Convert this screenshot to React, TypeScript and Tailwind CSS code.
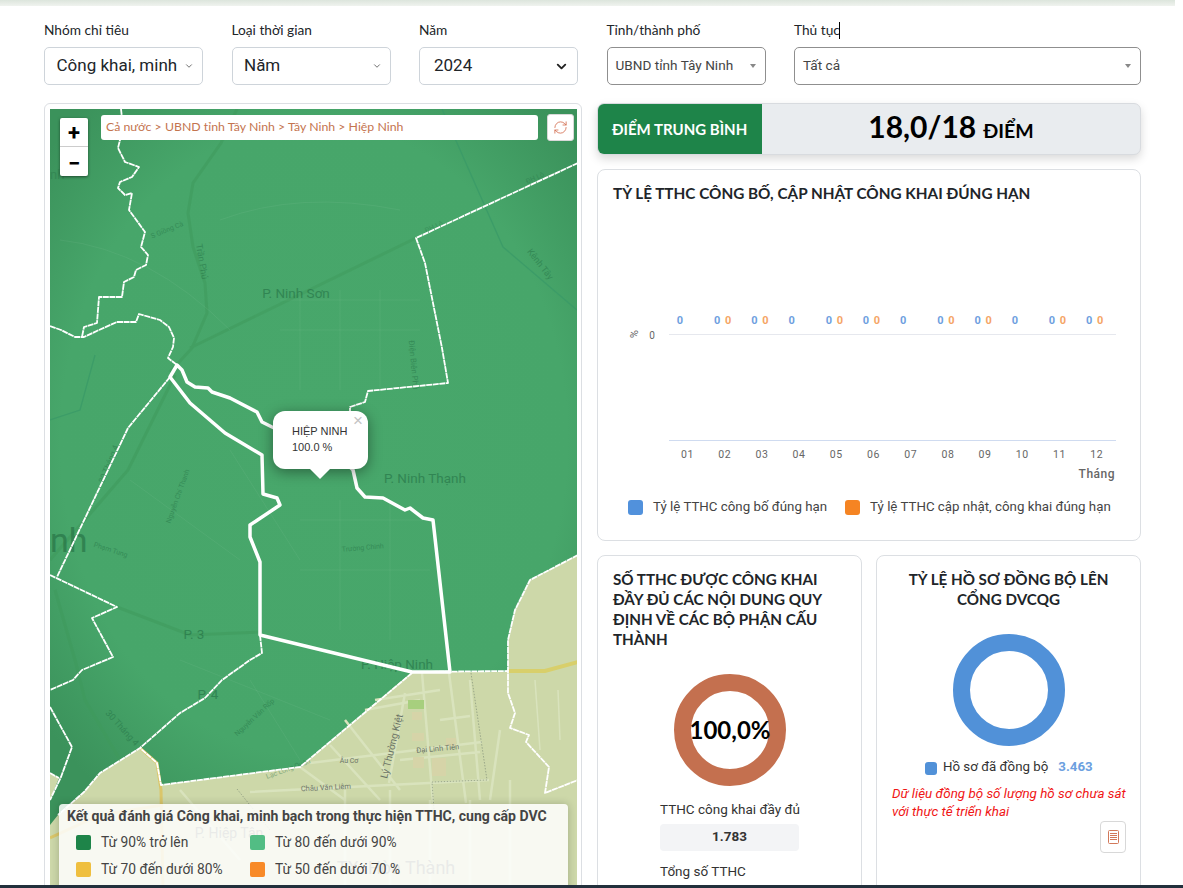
import React from "react";
import { RefreshCw, ChevronDown } from "lucide-react";

const HEAD = "font-['Lato','Noto_Sans',sans-serif]";
const ROB = "font-['Roboto',sans-serif]";

const thick =
  "177,365 182,370 187,382 195,387 208,388 212,392 230,398 257,412 262,422 272,427 300,440 350,467 353,470 357,488 365,497 383,498 405,510 410,508 423,518 433,520 450,672 412,672 260,635 260,562 250,537 250,525 280,505 277,498 263,494 262,455 225,433 190,403 170,377";

const dashed = [
  "121,109 122,118 120,140 118,148 125,162 139,167 132,177 120,182 118,188 125,195 132,193 129,210 145,232 141,247 148,255 146,265 136,270 134,277 124,282 122,297 99,297 97,323 84,327 82,337",
  "50,326 61,330 75,337 84,337 99,330 117,322 136,322 139,314 160,320 169,327 174,338 173,347 168,358 177,365",
  "578,163 416,238 425,263 442,348 448,383 368,391 365,402 350,407 350,412",
  "170,377 128,428 57,577",
  "50,575 117,607 92,618 113,657 82,670 73,680 50,690",
  "260,635 262,653 250,660 222,680 205,698 180,713 140,748 100,773 84,792 58,815",
  "50,707 72,747 61,777 50,800",
  "412,673 300,767 161,785 157,763 140,748",
  "412,672 508,671 508,693 515,713 510,728 529,735 526,742 549,767 545,793 578,780",
  "578,555 530,580 515,610 508,640 508,671",
  "50,773 59,778",
];

function GreenLabel({ x, y, r = 0, s = 9, t, o = 0.45 }: { x: number; y: number; r?: number; s?: number; t: string; o?: number }) {
  return (
    <text x={x} y={y} fontSize={s} fill="#1f6b41" opacity={o} textAnchor="middle" fontFamily="Roboto, sans-serif" transform={r ? `rotate(${r} ${x} ${y})` : undefined}>
      {t}
    </text>
  );
}

function LandLabel({ x, y, r = 0, s = 9, t, o = 0.85 }: { x: number; y: number; r?: number; s?: number; t: string; o?: number }) {
  return (
    <text x={x} y={y} fontSize={s} fill="#59635a" opacity={o} textAnchor="middle" fontFamily="Roboto, sans-serif" transform={r ? `rotate(${r} ${x} ${y})` : undefined}>
      {t}
    </text>
  );
}

function MapDrawing() {
  return (
    <svg viewBox="50 109 528 790" className="block w-[528px] h-[790px]">
      <defs>
        <radialGradient id="gr" gradientUnits="userSpaceOnUse" cx="314" cy="440" r="440" gradientTransform="translate(314 440) scale(0.8 1) translate(-314 -440)">
          <stop offset="0" stopColor="#48a76b" />
          <stop offset="0.72" stopColor="#47a66a" />
          <stop offset="1" stopColor="#3b925b" />
        </radialGradient>
      </defs>
      <rect x="50" y="109" width="528" height="790" fill="#cdd8a9" />
      <polygon points="50,109 578,109 578,555 530,580 515,610 508,640 508,672 412,672 300,767 161,785 157,763 140,748 100,773 84,792 58,815 50,825" fill="url(#gr)" />
      <polygon points="50,773 59,778 50,800" fill="#cdd8a9" />
      {/* green roads */}
      <g fill="none" stroke="#3f9a5c" strokeWidth="3" opacity="0.55">
        <polyline points="237,109 221,143 193,183 188,213 193,247 205,283 207,313 192,348 170,372" />
        <polyline points="190,348 416,238" />
        <polyline points="50,560 128,470 175,375" />
        <polyline points="117,607 190,635 260,632" />
        <polyline points="55,590 75,660 85,700 120,760" />
      </g>
      <g fill="none" stroke="#3a9a68" strokeWidth="1.3" opacity="0.8">
        <polyline points="442,109 503,247 577,310" />
        <polyline points="50,420 80,410 95,355" />
      </g>
      <g fill="none" stroke="#fff" strokeWidth="1" opacity="0.05">
        <path d="M280 300H420M280 330H420M300 290V390M340 290V390M380 290V390M230 450L300 560M130 480L240 560M300 520H430M300 570H430M340 500V630M390 500V640M180 660L330 720M250 680L300 760M220 220Q300 190 400 210M60 240Q150 250 230 330" />
      </g>
      {/* land roads */}
      <g fill="none" stroke="#d9e3bd" strokeWidth="2.5">
        <path d="M422 673L433 803M449 673L466 803M405 693L389 783M310 763L482 742M250 792L489 780M330 745L380 800M345 720L400 790M300 767L345 800M470 680L480 800M500 730L490 800M365 710L420 700M375 700L440 690M440 720L470 716M400 760L480 752M345 790L345 890M390 790L390 890M430 800L430 890M470 800L470 890M510 780L510 890M180 790L240 860" />
        <path d="M535 680L540 750M558 690L560 740" strokeWidth="1.5" />
      </g>
      <g fill="none" stroke="#dac66a" strokeWidth="3">
        <polyline points="508,671 545,671 578,662" stroke="#d8cf6b" strokeWidth="4" />
        <polyline points="140,748 157,763 161,790 163,890" />
        <polyline points="50,838 100,815 163,805" />
      </g>
      <polyline points="471,673 487,780 432,782 434,810" fill="none" stroke="#8d9a80" strokeWidth="0.8" strokeDasharray="1.5 1.5" />
      <polyline points="237,789 270,830" fill="none" stroke="#8d9a80" strokeWidth="0.8" strokeDasharray="1.5 1.5" />
      <rect x="408" y="700" width="16" height="9" fill="#a7cf7e" />
      <g fill="#d6d4a8">
        <rect x="412" y="712" width="10" height="8" />
        <rect x="412" y="733" width="12" height="8" />
        <rect x="413" y="757" width="11" height="11" />
        <rect x="432" y="758" width="14" height="18" />
        <rect x="446" y="738" width="10" height="8" />
      </g>
      {/* labels */}
      <GreenLabel x={296} y={298} s={13.5} t="P. Ninh Sơn" o={0.55} />
      <GreenLabel x={425} y={483} s={13.5} t="P. Ninh Thạnh" o={0.55} />
      <GreenLabel x={194} y={639} s={13.5} t="P. 3" o={0.55} />
      <GreenLabel x={208} y={699} s={13.5} t="P. 4" o={0.55} />
      <GreenLabel x={397} y={669} s={13.5} t="P. Hiệp Ninh" o={0.55} />
      <text x={50} y={552} fontSize="34" fill="#287547" opacity="0.7" fontFamily="Roboto, sans-serif">nh</text>
      <text x={50} y={179} fontSize="13" fill="#287547" opacity="0.4" fontFamily="Roboto, sans-serif">nh</text>
      <GreenLabel x={199} y={262} r={80} s={9} t="Trần Phú" />
      <GreenLabel x={538} y={266} r={52} s={9} t="Kênh Tây" />
      <GreenLabel x={168} y={232} r={-22} s={7} t="S Giồng Cà" />
      <GreenLabel x={536} y={180} r={-25} s={7} t="ĐH Lộ" o={0.35} />
      <GreenLabel x={435} y={229} r={-25} s={7} t="ĐH Lộ" o={0.35} />
      <GreenLabel x={411} y={365} r={85} s={8} t="Điện Biên Phủ" />
      <GreenLabel x={180} y={497} r={-70} s={7} t="Nguyễn Chí Thanh" />
      <GreenLabel x={110} y={552} r={18} s={7} t="Phạm Tung" />
      <GreenLabel x={363} y={550} r={-5} s={7} t="Trường Chinh" />
      <GreenLabel x={111} y={465} r={-68} s={8} t="30 Tháng 4" />
      <GreenLabel x={120} y={730} r={48} s={9} t="30 Tháng 4" />
      <GreenLabel x={256} y={719} r={-43} s={7} t="Nguyễn Văn Rốp" />
      <GreenLabel x={289} y={771} r={-20} s={7} t="Lạc Long Quân" />
      <LandLabel x={349} y={763} s={7} t="Âu Cơ" />
      <LandLabel x={438} y={751} r={-5} s={7.5} t="Đại Linh Tiên" />
      <LandLabel x={326} y={790} r={-3} s={7.5} t="Châu Văn Liêm" />
      <LandLabel x={395} y={747} r={-76} s={10} t="Lý Thường Kiệt" />
      <LandLabel x={229} y={838} s={14} t="P. Hiệp Tân" />
      <LandLabel x={396} y={874} s={18} t="TX. Hòa Thành" />
      {/* boundaries */}
      <g fill="none" stroke="#fff" strokeLinejoin="round">
        {dashed.map((p) => (
          <polyline key={p} points={p} strokeWidth="1.8" strokeDasharray="6 0.6" />
        ))}
        <polygon points={thick} strokeWidth="3.5" />
      </g>
    </svg>
  );
}

const months = ["01", "02", "03", "04", "05", "06", "07", "08", "09", "10", "11", "12"];
const hasOrange = [false, true, true, false, true, true, false, true, true, false, true, true];

function BarChart() {
  return (
    <svg viewBox="617 300 514 190" className="block w-[514px] h-[190px]">
      <line x1="669" x2="1116" y1="334.5" y2="334.5" stroke="#e6e8ee" />
      <line x1="669" x2="1116" y1="440.5" y2="440.5" stroke="#cfdbf0" />
      <text x="633" y="334" fontSize="11" fill="#666" fontFamily="Roboto, sans-serif" transform="rotate(90 633 334)" textAnchor="middle" dominantBaseline="middle">%</text>
      <text x="652" y="339" fontSize="10" fill="#666" textAnchor="middle" fontFamily="Roboto, sans-serif">0</text>
      {months.map((m, i) => {
        const x = 687.5 + i * 37.2;
        return (
          <g key={m} fontFamily="Roboto, sans-serif">
            <text x={x} y="458" fontSize="10.5" letterSpacing="0.6" fill="#666" textAnchor="middle">{m}</text>
            <text x={x - 7.5} y="324" fontSize="11" fontWeight="700" fill="#6f9fe0" textAnchor="middle">0</text>
            {hasOrange[i] && <text x={x + 3.5} y="324" fontSize="11" fontWeight="700" fill="#f5a566" textAnchor="middle">0</text>}
          </g>
        );
      })}
      <text x="1115" y="478" fontSize="12" letterSpacing="0.5" fontWeight="500" fill="#666" textAnchor="end" fontFamily="Roboto, sans-serif">Tháng</text>
    </svg>
  );
}

function Donut({ color }: { color: string }) {
  return (
    <svg viewBox="0 0 112 112" className="w-[112px] h-[112px] block">
      <circle cx="56" cy="56" r="47.5" fill="none" stroke={color} strokeWidth="17" />
    </svg>
  );
}

function Field({ label, cursor, children }: { label: string; cursor?: boolean; children: React.ReactNode }) {
  return (
    <div className="flex flex-col">
      <div className={`${HEAD} h-[27px] text-[13.7px] leading-[20px] text-[#212529] flex items-start`}>
        {label}
        {cursor && <span className="inline-block w-px h-[17px] bg-black ml-[-1px] mt-[2px]" />}
      </div>
      {children}
    </div>
  );
}

function BigSelect({ text, black }: { text: string; black?: boolean }) {
  return (
    <div className={`h-[38px] rounded-[5px] border border-[#ced4da] bg-white flex items-center pr-2 justify-between ${black ? "pl-[14px]" : "pl-[11.5px]"}`}>
      <span className={`${ROB} text-[17px] text-[#212529] whitespace-nowrap`}>{text}</span>
      {black ? <ChevronDown size={15} strokeWidth={3} color="#222" /> : <ChevronDown size={10} strokeWidth={2} color="#555" />}
    </div>
  );
}

function Select2({ text }: { text: string }) {
  return (
    <div className="h-[38px] rounded-[5px] border border-[#8f8f8f] bg-white flex items-center pl-2 pr-[9px] pb-px justify-between">
      <span className={`${ROB} text-[13.6px] text-[#444] whitespace-nowrap`}>{text}</span>
      <span className="w-0 h-0 border-x-[3.5px] border-x-transparent border-t-[4px] border-t-[#888]" />
    </div>
  );
}

function LegendItem({ c, t }: { c: string; t: string }) {
  return (
    <div className="flex items-center gap-[10px]">
      <span className={`w-[15px] h-[15px] rounded-[2px] ${c}`} />
      <span className={`${ROB} text-[13.8px] leading-[18px] text-[#444]`}>{t}</span>
    </div>
  );
}

export default function App() {
  return (
    <div className="relative w-[1183px] h-[888px] overflow-hidden bg-white flex flex-col">
      <div className="h-[6px] shrink-0 mr-[8px] bg-gradient-to-b from-[#dce5dc] to-[#f0f3ef]" />
      <div className="flex-1 min-h-0 pl-[44px] pt-[14px]">
        <div className="grid grid-cols-[159px_159px_159px_159px_347px] gap-x-[28.5px]">
          <Field label="Nhóm chỉ tiêu"><BigSelect text="Công khai, minh" /></Field>
          <Field label="Loại thời gian"><BigSelect text="Năm" /></Field>
          <Field label="Năm"><BigSelect text="2024" black /></Field>
          <Field label="Tỉnh/thành phố"><Select2 text="UBND tỉnh Tây Ninh" /></Field>
          <Field label="Thủ tục" cursor><Select2 text="Tất cả" /></Field>
        </div>

        <div className="flex gap-[15px] mt-[18px]">
          {/* Map card */}
          <div className="w-[538px] h-[800px] shrink-0 rounded-[6px] border border-[#dcdfe3] pt-[5px] pl-[5px] pr-[4px]">
            <div className="relative w-[527px] h-[795px] overflow-hidden">
              <MapDrawing />
              <div className="absolute left-[10px] top-[9px] w-[28px] h-[58px] bg-white rounded-[2px] shadow-[0_1px_3px_rgba(0,0,0,0.5)] flex flex-col">
                <div className={`h-[29px] flex items-center justify-center text-[22px] font-bold text-black border-b border-[#ccc] ${ROB}`}>+</div>
                <div className={`flex-1 flex items-center justify-center text-[22px] font-bold text-black ${ROB}`}>−</div>
              </div>
              <div className={`absolute left-[51px] top-[6px] w-[437px] h-[25px] bg-white rounded-[3px] flex items-center pl-[5px] ${HEAD} text-[12.3px] text-[#c4744f]`}>
                Cả nước &gt; UBND tỉnh Tây Ninh &gt; Tây Ninh &gt; Hiệp Ninh
              </div>
              <div className="absolute left-[497px] top-[5px] w-[27px] h-[27px] bg-white border border-[#d8d8d8] rounded-[3px] flex items-center justify-center">
                <RefreshCw size={15} strokeWidth={1.3} color="#d2694a" />
              </div>
              {/* popup */}
              <div className="absolute left-[223px] top-[302px] w-[95px] h-[58px] bg-white rounded-[12px] shadow-[0_3px_14px_rgba(0,0,0,0.4)] pl-[19px] pt-[12px] font-['Liberation_Sans',sans-serif] text-[11px] leading-[16px] text-[#333]">
                <div>HIỆP NINH</div>
                <div>100.0 %</div>
                <span className="absolute right-[5px] top-[1px] text-[17px] leading-[18px] text-[#c3c3c3]">×</span>
                <span className="absolute left-[37px] top-[58px] w-0 h-0 border-x-[10px] border-x-transparent border-t-[10px] border-t-white" />
              </div>
              {/* legend */}
              <div className="absolute left-[9px] top-[695px] w-[509px] h-[100px] bg-white/85 rounded-[4px] shadow-[0_0_8px_rgba(0,0,0,0.2)] pt-[3px] pl-[8px]">
                <div className={`${ROB} text-[14.05px] leading-[18px] font-bold text-[#444]`}>Kết quả đánh giá Công khai, minh bạch trong thực hiện TTHC, cung cấp DVC</div>
                <div className="grid grid-cols-[174px_200px] pl-[9px] mt-[8px] gap-y-[9px]">
                  <LegendItem c="bg-[#1e8449]" t="Từ 90% trở lên" />
                  <LegendItem c="bg-[#52bd84]" t="Từ 80 đến dưới 90%" />
                  <LegendItem c="bg-[#efbf3f]" t="Từ 70 đến dưới 80%" />
                  <LegendItem c="bg-[#f88a28]" t="Từ 50 đến dưới 70 %" />
                </div>
              </div>
            </div>
          </div>

          {/* Right column */}
          <div className="w-[544px] shrink-0 flex flex-col">
            <div className="h-[52px] flex rounded-[7px] overflow-hidden border border-[#d8dbdf] bg-[#e9ecef] shadow-[0_4px_10px_rgba(0,0,0,0.15)]">
              <div className={`w-[164px] bg-[#1e8449] flex items-center pl-[14px] text-white text-[15px] font-bold whitespace-nowrap ${HEAD}`}>ĐIỂM TRUNG BÌNH</div>
              <div className={`flex-1 flex items-baseline justify-center pt-[2px] ${HEAD} text-black font-bold`}>
                <span className="text-[30px] leading-[40px]">18,0/18</span>
                <span className="text-[19.5px] ml-[7px]">ĐIỂM</span>
              </div>
            </div>

            <div className="mt-[14px] h-[372px] rounded-[8px] border border-[#dcdfe3] pl-[15px] pt-[12px] flex flex-col">
              <div className={`${HEAD} text-[15.3px] leading-[22px] font-bold text-[#212529] whitespace-nowrap`}>TỶ LỆ TTHC CÔNG BỐ, CẬP NHẬT CÔNG KHAI ĐÚNG HẠN</div>
              <div className="mt-[96px] ml-[4px]">
                <BarChart />
              </div>
              <div className={`${ROB} flex items-center text-[13.3px] leading-[20px] text-[#444] ml-[15px] mt-[7px]`}>
                <span className="w-[15px] h-[15px] rounded-[3px] bg-[#5191dc]" />
                <span className="ml-[10px]">Tỷ lệ TTHC công bố đúng hạn</span>
                <span className="w-[15px] h-[15px] rounded-[3px] bg-[#f58423] ml-[18px]" />
                <span className="ml-[10px]">Tỷ lệ TTHC cập nhật, công khai đúng hạn</span>
              </div>
            </div>

            <div className="mt-[14px] flex gap-[14px]">
              <div className="w-[265px] h-[340px] shrink-0 rounded-[8px] border border-[#dcdfe3] pl-[15px] pr-[15px] pt-[13px]">
                <div className={`${HEAD} text-[15.2px] leading-[20px] font-bold text-[#212529]`}>SỐ TTHC ĐƯỢC CÔNG KHAI ĐẦY ĐỦ CÁC NỘI DUNG QUY ĐỊNH VỀ CÁC BỘ PHẬN CẤU THÀNH</div>
                <div className="relative w-[112px] h-[112px] mt-[25px] ml-[61px]">
                  <Donut color="#c4704f" />
                  <div className={`absolute inset-0 flex items-center justify-center text-[24px] font-bold text-black ${HEAD}`}>100,0%</div>
                </div>
                <div className={`${ROB} ml-[47px] w-[139px] text-[13.5px] text-[#333]`}>
                  <div className="mt-[12px] leading-[22px] whitespace-nowrap">TTHC công khai đầy đủ</div>
                  <div className="mt-[4px] h-[27px] rounded-[4px] bg-[#f3f4f6] flex items-center justify-center text-[13.5px] font-bold pb-[2px]">1.783</div>
                  <div className="mt-[9px] leading-[22px] whitespace-nowrap">Tổng số TTHC</div>
                </div>
              </div>
              <div className="w-[265px] h-[340px] shrink-0 rounded-[8px] border border-[#dcdfe3] pt-[13px]">
                <div className={`${HEAD} text-[15.2px] leading-[20px] font-bold text-[#212529] text-center px-[25px]`}>TỶ LỆ HỒ SƠ ĐỒNG BỘ LÊN CỔNG DVCQG</div>
                <div className="mt-[25px] flex justify-center">
                  <Donut color="#5191d8" />
                </div>
                <div className={`${ROB} mt-[12px] ml-[48px] flex items-center text-[13.3px] leading-[18px] text-[#333]`}>
                  <span className="w-[12px] h-[13px] rounded-[3px] bg-[#5191d8] mt-[3px]" />
                  <span className="ml-[6px]">Hồ sơ đã đồng bộ</span>
                  <span className="ml-[10px] font-bold text-[#6c9fe0]">3.463</span>
                </div>
                <div className={`${ROB} italic text-[13.4px] leading-[18px] text-[#f01515] ml-[15px] mr-[10px] mt-[9px]`}>
                  Dữ liệu đồng bộ số lượng hồ sơ chưa sát với thực tế triển khai
                </div>
                <div className="ml-[223px] mt-[0px] w-[26px] h-[32px] rounded-[4px] border border-[#d8d8d8] flex items-center justify-center">
                  <svg width="11" height="14" viewBox="0 0 11 14" fill="none" stroke="#d2795a" strokeWidth="1">
                    <rect x="0.5" y="0.5" width="10" height="13" rx="1" />
                    <path d="M2 3.5H9M2 5.5H9M2 7.5H9M2 9.5H9" />
                  </svg>
                </div>
              </div>
            </div>
          </div>
        </div>
      </div>
      <div className="absolute left-0 right-0 bottom-0 h-[3px] bg-[#22303c]" />
    </div>
  );
}
